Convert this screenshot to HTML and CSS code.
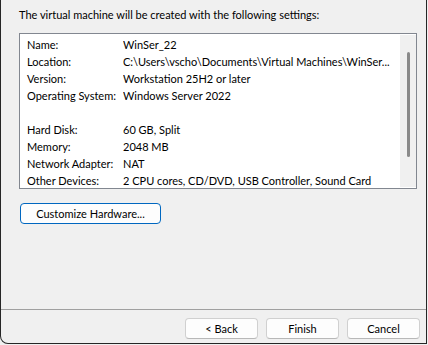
FILE: index.html
```html
<!DOCTYPE html>
<html lang="en">
  <head>
    <meta charset="UTF-8" />
    <title>New Virtual Machine Wizard</title>
    <link rel="stylesheet" href="styles.css">
  </head>
  <body>
    <div class="window">
      <div class="content">
        <p class="intro">The virtual machine will be created with the following settings:</p>

        <div class="listbox">
          <div class="rows">
            <table class="settings">
              <tr><td class="label">Name:</td><td>WinSer_22</td></tr>
              <tr><td class="label">Location:</td><td>C:\Users\vscho\Documents\Virtual Machines\WinSer...</td></tr>
              <tr><td class="label">Version:</td><td>Workstation 25H2 or later</td></tr>
              <tr><td class="label">Operating System:</td><td>Windows Server 2022</td></tr>
              <tr><td class="label">&nbsp;</td><td></td></tr>
              <tr><td class="label">Hard Disk:</td><td>60 GB, Split</td></tr>
              <tr><td class="label">Memory:</td><td>2048 MB</td></tr>
              <tr><td class="label">Network Adapter:</td><td>NAT</td></tr>
              <tr><td class="label">Other Devices:</td><td>2 CPU cores, CD/DVD, USB Controller, Sound Card</td></tr>
            </table>
          </div>
          <div class="scrollbar">
            <div class="thumb"></div>
          </div>
        </div>

        <button class="btn btn-default">Customize Hardware...</button>
      </div>

      <div class="footer">
        <button class="btn">&lt; Back</button>
        <button class="btn">Finish</button>
        <button class="btn">Cancel</button>
      </div>
    </div>
  </body>
</html>
```

FILE: styles.css
```css
body {
    margin: 0;
    background-color: #f0f0f0;
    font-family: "Segoe UI", Lato, sans-serif;
    font-size: 11px;
    color: #000;
}

.window {
    height: 344px;
    box-sizing: border-box;
    width: 427px;
    border-left: 1px solid #262626;
    border-right: 1px solid #262626;
    border-bottom: 1px solid #262626;
    border-bottom-left-radius: 8px;
    background-color: #f0f0f0;
    display: flex;
    flex-direction: column;
}

.content {
    flex: 1;
    padding: 0 0 0 18px;
}

.intro {
    margin: 6px 0 0 0;
    line-height: 17px;
}

.listbox {
    margin-top: 10px;
    width: 398px;
    height: 156px;
    box-sizing: border-box;
    border: 1px solid #828790;
    background-color: #fff;
    display: flex;
}

.rows {
    flex: 1;
    min-width: 0;
    overflow: hidden;
    padding-top: 2px;
}

.settings {
    width: 100%;
    table-layout: fixed;
    border-collapse: collapse;
}

.settings td {
    padding: 0;
    height: 17px;
    line-height: 17px;
    white-space: nowrap;
    overflow: hidden;
}

.settings .label {
    width: 96px;
    padding-left: 7px;
}

.scrollbar {
    width: 16px;
    margin: 1px 0;
    background-color: #f0f0f0;
    display: flex;
    justify-content: center;
}

.thumb {
    width: 3px;
    height: 105px;
    margin-top: 17px;
    background-color: #8a8a8a;
    border-radius: 2px;
}

.btn {
    font-family: inherit;
    font-size: 11px;
    color: #000;
    height: 21px;
    padding: 0;
    background-color: #fdfdfd;
    border: 1px solid #d0d0d0;
    border-bottom-color: #b8b8b8;
    border-radius: 4px;
}

.btn-default {
    display: block;
    width: 141px;
    margin: 14px 0 0 1px;
    border: 1px solid #0067c0;
}

.footer {
    border-top: 1px solid #a0a0a0;
    height: 34px;
    box-sizing: border-box;
    padding: 8px 6px 0 0;
    display: flex;
    justify-content: flex-end;
    gap: 8px;
}

.footer .btn {
    width: 73px;
}
```
